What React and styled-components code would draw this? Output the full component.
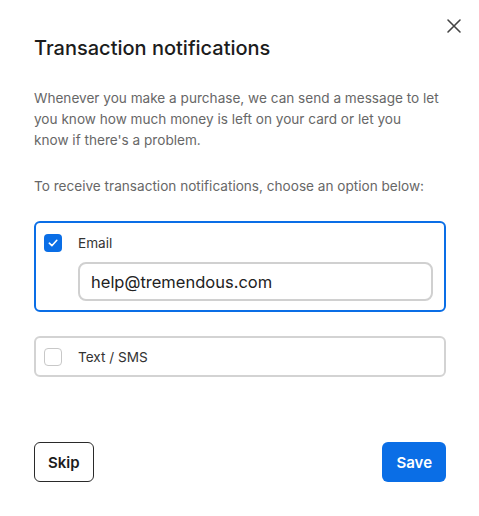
import React, { useState } from 'react';
import styled, { createGlobalStyle } from 'styled-components';

const GlobalStyle = createGlobalStyle`
    body {
        margin: 0;
        background: #ffffff;
        font-family: 'Inter', 'Noto Sans', sans-serif;
    }
`;

// Styled-Components
const Modal = styled.div`
    position: relative;
    box-sizing: border-box;
    width: 479px;
    height: 516px;
    padding: 36px 33px 0 34px;
    background: #ffffff;
    display: flex;
    flex-direction: column;
`;

const CloseBtn = styled.button`
    position: absolute;
    top: 17px;
    right: 16px;
    width: 18px;
    height: 18px;
    padding: 0;
    border: none;
    background: none;
    cursor: pointer;
    display: flex;
    align-items: center;
    justify-content: center;
`;

const Title = styled.h2`
    margin: 0;
    font-size: 20px;
    line-height: 24px;
    font-weight: 500;
    color: #1c1c1c;
`;

const Text = styled.p`
    margin: ${props => props.$top}px 0 0;
    font-size: 13.6px;
    line-height: 21px;
    color: #676767;
`;

const Options = styled.div`
    display: flex;
    flex-direction: column;
    gap: 24px;
    margin-top: 24px;
`;

const Option = styled.div`
    box-sizing: border-box;
    border: ${props => props.$active ? '2px solid #0a6ee6' : '2px solid #d3d3d3'};
    border-radius: 6px;
    padding: ${props => props.$active ? '10px 11px 9px 8px' : '9px 11px 9px 8px'};
    display: flex;
    flex-direction: column;
    gap: 10px;
`;

const Row = styled.label`
    display: flex;
    align-items: center;
    gap: 16px;
    height: 19px;
    font-size: 13.6px;
    color: #333333;
    cursor: pointer;
`;

const Box = styled.span`
    box-sizing: border-box;
    width: 18px;
    height: 18px;
    border-radius: 4px;
    display: flex;
    align-items: center;
    justify-content: center;
    background: ${props => props.$checked ? '#0a6ee6' : '#ffffff'};
    border: ${props => props.$checked ? 'none' : '1.5px solid #c8c8c8'};
`;

const Input = styled.input`
    box-sizing: border-box;
    margin-left: 34px;
    height: 39px;
    border: 2px solid #d0d0d0;
    border-radius: 8px;
    padding: 0 11px;
    font-family: 'Inter', 'Noto Sans', sans-serif;
    font-size: 16.5px;
    color: #222222;
    outline: none;
`;

const Footer = styled.div`
    display: flex;
    justify-content: space-between;
    margin-top: 65px;
`;

const Button = styled.button`
    box-sizing: border-box;
    height: 40px;
    padding: 0 ${props => props.$primary ? '14px' : '13px'};
    border-radius: 6px;
    font-family: 'Inter', 'Noto Sans', sans-serif;
    font-size: 15px;
    font-weight: 600;
    cursor: pointer;
    background: ${props => props.$primary ? '#0a6ee6' : '#ffffff'};
    color: ${props => props.$primary ? '#ffffff' : '#1c1c1c'};
    border: ${props => props.$primary ? 'none' : '1px solid #2a2a2a'};
`;

const Check = () => (
    <svg width="12" height="12" viewBox="0 0 12 12" fill="none">
        <path d="M2.3 6.2 L4.9 8.7 L9.8 3.3" stroke="#ffffff" strokeWidth="1.6" strokeLinecap="round" strokeLinejoin="round" />
    </svg>
);

// Components
const App = () => {
    const [email, setEmail] = useState(true);
    const [sms, setSms] = useState(false);

    return (
        <>
            <GlobalStyle />
            <Modal>
                <CloseBtn aria-label="Close">
                    <svg width="16" height="16" viewBox="0 0 16 16">
                        <path d="M2 2 L14 14 M14 2 L2 14" stroke="#444" strokeWidth="1.6" strokeLinecap="round" />
                    </svg>
                </CloseBtn>
                <Title>Transaction notifications</Title>
                <Text $top={28}>
                    Whenever you make a purchase, we can send a message to let you know how much money is left on your card or let you<br />
                    know if there's a problem.
                </Text>
                <Text $top={25}>To receive transaction notifications, choose an option below:</Text>
                <Options>
                    <Option $active={email}>
                        <Row onClick={() => setEmail(!email)}>
                            <Box $checked={email}>{email && <Check />}</Box>
                            Email
                        </Row>
                        {email && <Input defaultValue="help@tremendous.com" />}
                    </Option>
                    <Option $active={sms}>
                        <Row onClick={() => setSms(!sms)}>
                            <Box $checked={sms}>{sms && <Check />}</Box>
                            Text / SMS
                        </Row>
                    </Option>
                </Options>
                <Footer>
                    <Button>Skip</Button>
                    <Button $primary>Save</Button>
                </Footer>
            </Modal>
        </>
    );
};

export default App;
